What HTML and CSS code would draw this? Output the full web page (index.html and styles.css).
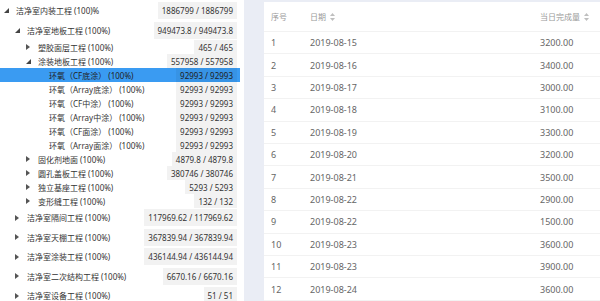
FILE: index.html
```html
<!DOCTYPE html>
<html lang="zh-CN">

<head>
    <meta charset="UTF-8">
    <meta name="viewport" content="width=device-width, initial-scale=1.0">
    <title>工程进度</title>
    <link rel="stylesheet" href="styles.css">
</head>

<body>
    <div class="page">
        <div class="tree">
            <div class="node big lvl0">
                <span class="toggle"><svg width="5" height="5" viewBox="0 0 5 5"><polygon points="5,0 5,5 0,5" fill="#444"/></svg></span>
                <span class="label">洁净室内装工程 (100)%</span>
                <span class="num">1886799 / 1886799</span>
            </div>
            <div class="node big lvl1">
                <span class="toggle"><svg width="5" height="5" viewBox="0 0 5 5"><polygon points="5,0 5,5 0,5" fill="#444"/></svg></span>
                <span class="label">洁净室地板工程 (100%)</span>
                <span class="num">949473.8 / 949473.8</span>
            </div>
            <div class="node lvl2">
                <span class="toggle"><svg width="4" height="6" viewBox="0 0 4 6"><polygon points="0,0 4,3 0,6" fill="#555"/></svg></span>
                <span class="label">塑胶面层工程 (100%)</span>
                <span class="num">465 / 465</span>
            </div>
            <div class="node lvl2">
                <span class="toggle"><svg width="5" height="5" viewBox="0 0 5 5"><polygon points="5,0 5,5 0,5" fill="#444"/></svg></span>
                <span class="label">涂装地板工程 (100%)</span>
                <span class="num">557958 / 557958</span>
            </div>
            <div class="node lvl3 selected">
                <span class="label">环氧（CF底涂） (100%)</span>
                <span class="num">92993 / 92993</span>
            </div>
            <div class="node lvl3">
                <span class="label">环氧（Array底涂） (100%)</span>
                <span class="num">92993 / 92993</span>
            </div>
            <div class="node lvl3">
                <span class="label">环氧（CF中涂） (100%)</span>
                <span class="num">92993 / 92993</span>
            </div>
            <div class="node lvl3">
                <span class="label">环氧（Array中涂） (100%)</span>
                <span class="num">92993 / 92993</span>
            </div>
            <div class="node lvl3">
                <span class="label">环氧（CF面涂） (100%)</span>
                <span class="num">92993 / 92993</span>
            </div>
            <div class="node lvl3">
                <span class="label">环氧（Array面涂） (100%)</span>
                <span class="num">92993 / 92993</span>
            </div>
            <div class="node lvl2">
                <span class="toggle"><svg width="4" height="6" viewBox="0 0 4 6"><polygon points="0,0 4,3 0,6" fill="#555"/></svg></span>
                <span class="label">固化剂地面 (100%)</span>
                <span class="num">4879.8 / 4879.8</span>
            </div>
            <div class="node lvl2">
                <span class="toggle"><svg width="4" height="6" viewBox="0 0 4 6"><polygon points="0,0 4,3 0,6" fill="#555"/></svg></span>
                <span class="label">圆孔盖板工程 (100%)</span>
                <span class="num">380746 / 380746</span>
            </div>
            <div class="node lvl2">
                <span class="toggle"><svg width="4" height="6" viewBox="0 0 4 6"><polygon points="0,0 4,3 0,6" fill="#555"/></svg></span>
                <span class="label">独立基座工程 (100%)</span>
                <span class="num">5293 / 5293</span>
            </div>
            <div class="node lvl2">
                <span class="toggle"><svg width="4" height="6" viewBox="0 0 4 6"><polygon points="0,0 4,3 0,6" fill="#555"/></svg></span>
                <span class="label">变形缝工程 (100%)</span>
                <span class="num">132 / 132</span>
            </div>
            <div class="node big lvl1">
                <span class="toggle"><svg width="4" height="6" viewBox="0 0 4 6"><polygon points="0,0 4,3 0,6" fill="#555"/></svg></span>
                <span class="label">洁净室隔间工程 (100%)</span>
                <span class="num">117969.62 / 117969.62</span>
            </div>
            <div class="node big lvl1">
                <span class="toggle"><svg width="4" height="6" viewBox="0 0 4 6"><polygon points="0,0 4,3 0,6" fill="#555"/></svg></span>
                <span class="label">洁净室天棚工程 (100%)</span>
                <span class="num">367839.94 / 367839.94</span>
            </div>
            <div class="node big lvl1">
                <span class="toggle"><svg width="4" height="6" viewBox="0 0 4 6"><polygon points="0,0 4,3 0,6" fill="#555"/></svg></span>
                <span class="label">洁净室涂装工程 (100%)</span>
                <span class="num">436144.94 / 436144.94</span>
            </div>
            <div class="node big lvl1">
                <span class="toggle"><svg width="4" height="6" viewBox="0 0 4 6"><polygon points="0,0 4,3 0,6" fill="#555"/></svg></span>
                <span class="label">洁净室二次结构工程 (100%)</span>
                <span class="num">6670.16 / 6670.16</span>
            </div>
            <div class="node big lvl1">
                <span class="toggle"><svg width="4" height="6" viewBox="0 0 4 6"><polygon points="0,0 4,3 0,6" fill="#555"/></svg></span>
                <span class="label">洁净室设备工程 (100%)</span>
                <span class="num">51 / 51</span>
            </div>
        </div>

        <div class="gutter"></div>

        <div class="panel">
            <table class="grid">
                <thead>
                    <tr>
                        <th class="c-no">序号</th>
                        <th class="c-date">日期 <svg class="sort" width="5" height="8" viewBox="0 0 5 8"><polygon points="2.5,0 5,3 0,3" fill="#bfbfbf"/><polygon points="0,5 5,5 2.5,8" fill="#bfbfbf"/></svg></th>
                        <th class="c-qty">当日完成量 <svg class="sort" width="5" height="8" viewBox="0 0 5 8"><polygon points="2.5,0 5,3 0,3" fill="#bfbfbf"/><polygon points="0,5 5,5 2.5,8" fill="#bfbfbf"/></svg></th>
                    </tr>
                </thead>
                <tbody>
                    <tr><td>1</td><td>2019-08-15</td><td>3200.00</td></tr>
                    <tr><td>2</td><td>2019-08-16</td><td>3400.00</td></tr>
                    <tr><td>3</td><td>2019-08-17</td><td>3000.00</td></tr>
                    <tr><td>4</td><td>2019-08-18</td><td>3100.00</td></tr>
                    <tr><td>5</td><td>2019-08-19</td><td>3300.00</td></tr>
                    <tr><td>6</td><td>2019-08-20</td><td>3200.00</td></tr>
                    <tr><td>7</td><td>2019-08-21</td><td>3500.00</td></tr>
                    <tr><td>8</td><td>2019-08-22</td><td>2900.00</td></tr>
                    <tr><td>9</td><td>2019-08-22</td><td>1500.00</td></tr>
                    <tr><td>10</td><td>2019-08-23</td><td>3600.00</td></tr>
                    <tr><td>11</td><td>2019-08-23</td><td>3900.00</td></tr>
                    <tr><td>12</td><td>2019-08-24</td><td>3600.00</td></tr>
                </tbody>
            </table>
        </div>
    </div>
</body>

</html>
```

FILE: styles.css
```css
html,
body {
    margin: 0;
    height: 100%;
    overflow: hidden;
}

body {
    font-family: "Noto Sans", "Noto Sans CJK SC", sans-serif;
    background-color: #fff;
}

.page {
    display: flex;
    height: 301px;
}

/* left tree */
.tree {
    width: 240px;
    padding: 1px 4px 0 0;
    font-size: 8px;
    color: #333;
}

.node {
    display: flex;
    align-items: center;
    height: 14px;
    padding-right: 3px;
    white-space: nowrap;
}

.node.big {
    height: 19.5px;
}

.lvl0 { padding-left: 2px; }
.lvl1 { padding-left: 13px; }
.lvl2 { padding-left: 24px; }
.lvl3 { padding-left: 49px; }

.toggle {
    display: flex;
    align-items: center;
    width: 12px;
    padding-left: 2px;
}

.label {
    flex: 1;
}

.num {
    display: flex;
    align-items: center;
    height: 14px;
    padding: 0 4px;
    background-color: rgba(0, 0, 0, 0.05);
}

.big .num {
    height: 17px;
}

.node.selected {
    background-color: #3a9bf2;
    color: #222;
}

/* right table */
.gutter {
    width: 20px;
    background-color: #eaedf5;
}

.panel {
    flex: 1;
    padding-top: 2px;
    background-color: #eaedf5;
    overflow: hidden;
}

.grid {
    width: 360px;
    height: 100%;
    border-collapse: collapse;
    background-color: #fff;
    table-layout: fixed;
}

.grid th,
.grid td {
    padding: 0 0 0 7px;
    text-align: left;
    white-space: nowrap;
    border-bottom: 1px solid #f2f2f2;
}

.grid th {
    height: 29px;
    font-size: 8px;
    font-weight: normal;
    color: #999;
}

.grid td {
    height: 21.4px;
    font-size: 9px;
    color: #666;
}

.c-no { width: 32px; }
.c-date { width: 223px; }

.sort {
    vertical-align: -1px;
    margin-left: 2px;
}
```
